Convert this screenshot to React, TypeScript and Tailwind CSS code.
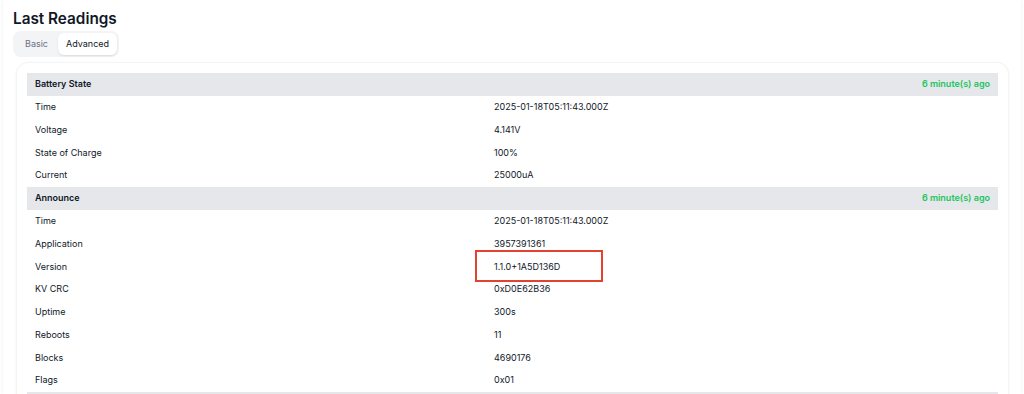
import React from 'react';

type Row = { label: string; value: string; mark?: boolean };
type Section = { title: string; ago: string; rows: Row[] };

const sections: Section[] = [
    {
        title: 'Battery State',
        ago: '6 minute(s) ago',
        rows: [
            { label: 'Time', value: '2025-01-18T05:11:43.000Z' },
            { label: 'Voltage', value: '4.141V' },
            { label: 'State of Charge', value: '100%' },
            { label: 'Current', value: '25000uA' },
        ],
    },
    {
        title: 'Announce',
        ago: '6 minute(s) ago',
        rows: [
            { label: 'Time', value: '2025-01-18T05:11:43.000Z' },
            { label: 'Application', value: '3957391361' },
            { label: 'Version', value: '1.1.0+1A5D136D', mark: true },
            { label: 'KV CRC', value: '0xD0E62B36' },
            { label: 'Uptime', value: '300s' },
            { label: 'Reboots', value: '11' },
            { label: 'Blocks', value: '4690176' },
            { label: 'Flags', value: '0x01' },
        ],
    },
];

const App: React.FC = () => {
    return (
        <div className="h-[394px] overflow-hidden bg-white" style={{ fontFamily: 'Inter, "Noto Sans", sans-serif' }}>
            <div className="mx-[3px] h-full px-[10px] pt-[8px] shadow-[0_0_4px_rgba(0,0,0,0.07)]">
                <h1 className="text-[15.3px] font-semibold leading-[21px] text-gray-900">Last Readings</h1>

                {/* Tabs */}
                <div className="inline-flex items-center rounded-lg bg-gray-100 p-[2px] text-[9px]">
                    <button className="px-[10px] py-[4px] text-gray-500">Basic</button>
                    <button className="rounded-md bg-white px-[8px] py-[4px] text-gray-900 shadow-[0_1px_2px_rgba(0,0,0,0.1)]">Advanced</button>
                </div>

                {/* Card */}
                <div className="ml-[3px] mr-[2px] mt-[5px] rounded-xl border border-gray-100 bg-white px-[10px] pt-[10px] shadow-[0_1px_3px_rgba(0,0,0,0.05)]">
                    {sections.map((s) => (
                        <div key={s.title}>
                            <div className="flex h-[23px] items-center justify-between bg-[#e5e7eb] px-[8px] text-[9px] font-semibold text-gray-900">
                                <span>{s.title}</span>
                                <span className="text-[#22c55e]">{s.ago}</span>
                            </div>
                            {s.rows.map((r) => (
                                <div key={r.label} className="flex h-[22.75px] items-center text-[9px] text-gray-900">
                                    <div className="w-[459px] px-[8px]">{r.label}</div>
                                    <div className="relative px-[8px]">
                                        {r.value}
                                        {r.mark && (
                                            <div className="absolute left-[-11px] top-[-10px] h-[32px] w-[128px] border-2 border-[#e5412f]" />
                                        )}
                                    </div>
                                </div>
                            ))}
                        </div>
                    ))}
                    {/* next section header, cut by the window */}
                    <div className="h-[23px] bg-[#e5e7eb]" />
                </div>
            </div>
        </div>
    );
};

export default App;
